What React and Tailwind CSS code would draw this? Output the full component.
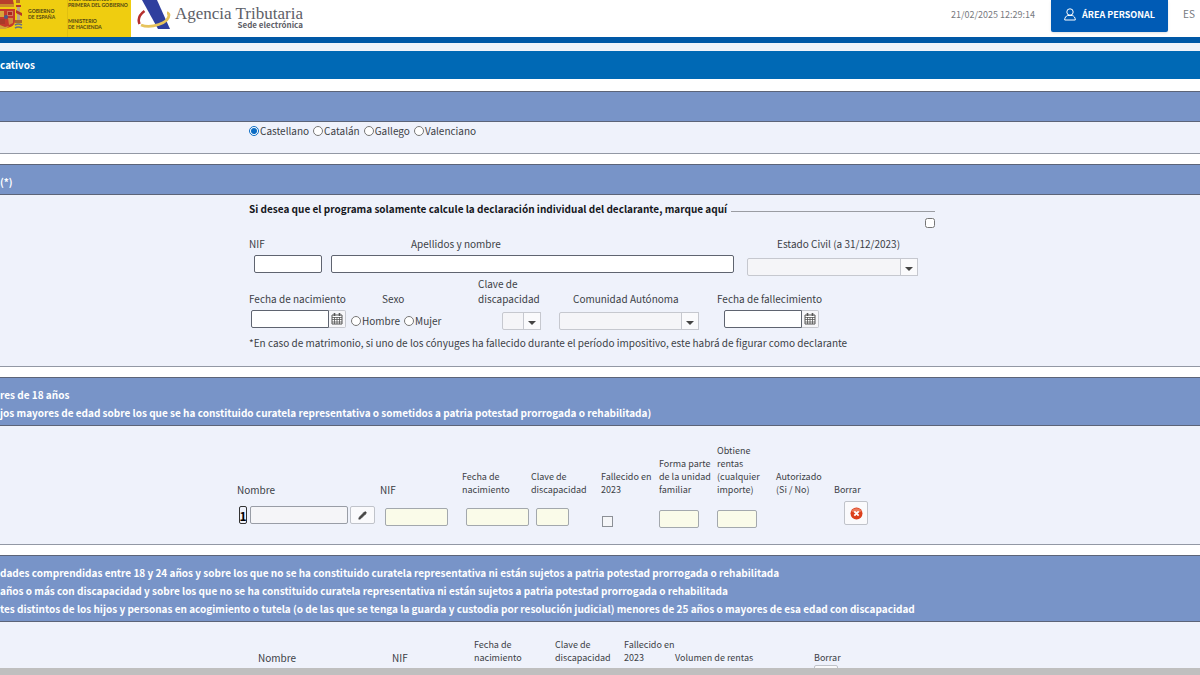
import { useState } from 'react';
import { Pencil } from 'lucide-react';

const languages = ['Castellano', 'Catalán', 'Gallego', 'Valenciano'];

const EmblemIcon = () => (
  <svg width="24" height="36" viewBox="0 0 24 36" aria-hidden="true">
    <path d="M0 0h13l1 5H0z" fill="#b8402c" />
    <path d="M0 4h14v3H0z" fill="#c98a2c" />
    <path d="M0 9h15v12c0 5-6 7-9 7H0z" fill="#c4392c" />
    <path d="M0 11h4v6H0z" fill="#d9a33a" />
    <path d="M7 11h6v5H7z" fill="#cf7a5c" />
    <path d="M8 12h4v3H8z" fill="#a82a20" />
    <path d="M8 18h5v5l-4 2z" fill="#d08a3c" />
    <path d="M0 19h5v5H0z" fill="#a93a2a" />
    <circle cx="6" cy="17" r="2" fill="#4a5a8a" />
    <path d="M0 25l5 2 4-1-3 3H0z" fill="#cfa43a" />
    <path d="M16 0h4v3h-4z" fill="#b06a2a" />
    <path d="M17 6h3v15h-3z" fill="#b9a48a" />
    <path d="M16 10l6 3v3l-6-3zM16 5h5v2h-5z" fill="#b3372a" />
    <path d="M15 20h7v3h-7z" fill="#a8672a" />
    <path d="M15 25q3-2 7 0M15 28q3-2 7 0" stroke="#64708a" strokeWidth="1.6" fill="none" />
  </svg>
);

const AgencyLogo = () => (
  <svg width="36" height="32" viewBox="0 0 36 32" fill="none" aria-hidden="true">
    <path d="M5 0h15l13 29H21z" fill="#2f3f9e" />
    <path d="M7.500 11C2 15 .5 19 2.500 24" stroke="#b5302e" strokeWidth="2.500" />
    <path d="M4 25c10 4 28-2 28-10 0-1-1-2-2-2" stroke="#e6c35c" strokeWidth="2.800" />
  </svg>
);

const CalendarIcon = () => (
  <svg width="12" height="12" viewBox="0 0 12 12" aria-hidden="true">
    <path d="M1 2h10v9H1z" fill="#fff" stroke="#555" />
    <path d="M1 4.500h10M1 6.500h10M1 9h10M3.500 4v7M6 4v7M8.500 4v7" stroke="#555" strokeWidth=".8" />
    <path d="M3.500 0v3M8.500 0v3" stroke="#555" strokeWidth="1.600" />
  </svg>
);

const UserIcon = () => (
  <svg width="12" height="13" viewBox="0 0 12 13" fill="none" stroke="#fff" aria-hidden="true">
    <circle cx="6" cy="4" r="3.200" />
    <path d="M.7 12c0-2.500 1.300-4 3-4.500h4.600c1.700.5 3 2 3 4.500z" />
  </svg>
);

const DeleteIcon = () => (
  <svg width="13" height="13" viewBox="0 0 13 13" aria-hidden="true">
    <circle cx="6.500" cy="6.500" r="6" fill="#dc3f1c" />
    <path d="M1.500 4.500a5.500 5.500 0 0 1 10 0q-5 2-10 0z" fill="#ec7a5c" />
    <path d="M4.300 4.300l4.400 4.400M8.700 4.300L4.300 8.700" stroke="#fff" strokeWidth="1.800" />
  </svg>
);

const Section = ({ lines, children }) => (
  <section className="mb-[10px]">
    <header className="min-h-[31px] border-y border-[#5c6478] bg-[#7894c8] pt-2 pb-[3px] font-bold leading-[18px] text-white">
      {lines.map((line) => (
        <h2 key={line} className="whitespace-nowrap">{line}</h2>
      ))}
    </header>
    <div className="border-b border-[#9298a4] bg-[#eff2fb]">{children}</div>
  </section>
);

const SelectBox = ({ id, className }) => (
  <div className={`relative h-[18px] ${className}`}>
    <select id={id} className="block h-full w-full appearance-none rounded-xs border border-[#c6c8cf] bg-[#f5f5f8]">
      <option></option>
    </select>
    <span className="pointer-events-none absolute inset-y-0 right-0 flex w-[18px] items-center justify-center border border-[#c6c8cf] bg-[#fafafc]">
      <svg width="8" height="4" viewBox="0 0 8 4" className="mt-1" aria-hidden="true">
        <path d="M0 0h8L4 4z" fill="#444" />
      </svg>
    </span>
  </div>
);

const DateBox = ({ id, className }) => (
  <div className={`flex h-[18px] ${className}`}>
    <input id={id} type="text" className="w-[78px] rounded-l-xs border border-[#5f6470] bg-white px-1" />
    <button type="button" aria-label="Calendario" className="flex w-[17px] items-center justify-center rounded-r-xs border border-l-0 border-[#c6c8cf] bg-[#f7f7fa]">
      <CalendarIcon />
    </button>
  </div>
);

const radioStyle = 'm-0 size-[10px] accent-[#0a6cc4]';
const cellInput = 'block h-[18px] rounded-xs border border-[#a3a8ad] bg-[#fafbe9]';

const App = () => {
  const [language, setLanguage] = useState('Castellano');

  return (
    <div className="flex h-screen flex-col overflow-hidden bg-white font-['Noto_Sans_CJK_SC',sans-serif] text-[10px] leading-4 text-[#3c3f46]">
      <header className="flex h-[43px] shrink-0 justify-between border-b-[6px] border-[#0058a6]">
        <div className="flex overflow-hidden">
          <div className="flex h-[37px] w-[131px] bg-[#efcd10] font-['Lato',sans-serif] text-[5px] font-bold leading-[6px] text-[#4e4312]">
            <EmblemIcon />
            <p className="w-[43px] pt-2 pl-1">GOBIERNO<br />DE ESPAÑA</p>
            <p className="flex flex-col justify-end whitespace-nowrap border-l border-[#e0c010] pb-[7px]">
              <span>VICEPRESIDENCIA</span>
              <span className="mb-[10px]">PRIMERA DEL GOBIERNO</span>
              <span>MINISTERIO</span>
              <span>DE HACIENDA</span>
            </p>
          </div>
          <div className="ml-[6px] flex">
            <AgencyLogo />
            <div className="pt-[6px] pl-[2px] text-right text-[#5e6067]">
              <p className="font-['Liberation_Serif',serif] text-[17px] leading-[15px]">Agencia Tributaria</p>
              <p className="text-[8px] font-bold leading-[8px]">Sede electrónica</p>
            </div>
          </div>
        </div>
        <div className="flex items-start">
          <time className="pt-[7px] text-[9px] text-[#777a80]">21/02/2025 12:29:14</time>
          <button type="button" className="ml-4 flex h-8 w-[117px] items-center justify-center gap-[6px] rounded-b-xs bg-[#005bb5] pb-[3px] text-[9px] font-bold text-white shadow">
            <UserIcon />
            ÁREA PERSONAL
          </button>
          <a href="#idioma" className="w-8 pt-[6px] pl-[15px] text-[10px] text-[#777a80]">ES</a>
        </div>
      </header>

      <main className="min-h-0 flex-1 overflow-hidden">
        <div className="h-2 bg-[#f0f3fa]"></div>
        <h1 className="mb-3 h-7 bg-[#0069b5] pt-[6px] font-bold text-white">cativos</h1>

        <Section lines={[]}>
          <div className="flex h-[31px] gap-1 pt-px pl-[249px]">
            {languages.map((item) => (
              <label key={item} className="flex h-4 items-center gap-px">
                <input
                  type="radio"
                  name="language"
                  className={radioStyle}
                  checked={language === item}
                  onChange={() => setLanguage(item)}
                />
                {item}
              </label>
            ))}
          </div>
        </Section>

        <Section lines={['(*)']}>
          <div className="h-[171px] pt-[6px] pl-[249px]">
            <div className="w-[686px]">
              <label htmlFor="individual" className="flex items-center gap-1 whitespace-nowrap font-bold text-[#15171c]">
                Si desea que el programa solamente calcule la declaración individual del declarante, marque aquí
                <span className="mt-1 flex-1 border-b border-[#9a9ca2]"></span>
              </label>
              <input id="individual" type="checkbox" className="mt-px ml-auto block size-[10px]" />
            </div>

            <div className="mt-2 grid grid-cols-[82px_416px_171px]">
              <div>
                <label htmlFor="nif" className="block">NIF</label>
                <input id="nif" type="text" className="mt-[3px] ml-[5px] block h-[18px] w-[68px] rounded-xs border border-[#5f6470] bg-white px-1" />
              </div>
              <div>
                <label htmlFor="name" className="block pl-20">Apellidos y nombre</label>
                <input id="name" type="text" className="mt-[3px] block h-[18px] w-[403px] rounded-xs border border-[#5f6470] bg-white px-1" />
              </div>
              <div>
                <label htmlFor="civil" className="block pl-[30px]">Estado Civil (a 31/12/2023)</label>
                <SelectBox id="civil" className="mt-[6px] w-[171px]" />
              </div>
            </div>

            <div className="grid grid-cols-[102px_127px_81px_158px_110px] items-end whitespace-nowrap leading-[15px]">
              <label htmlFor="birth">Fecha de nacimiento</label>
              <span className="pl-[31px]">Sexo</span>
              <label htmlFor="key">Clave de<br />discapacidad</label>
              <label htmlFor="region" className="pl-[14px]">Comunidad Autónoma</label>
              <label htmlFor="death">Fecha de fallecimiento</label>
            </div>
            <div className="mt-1 grid grid-cols-[102px_127px_81px_158px_110px] items-start">
              <DateBox id="birth" className="pl-[2px]" />
              <div className="flex gap-1 pt-[3px]">
                <label className="flex items-center gap-px"><input type="radio" name="sex" className={radioStyle} />Hombre</label>
                <label className="flex items-center gap-px"><input type="radio" name="sex" className={radioStyle} />Mujer</label>
              </div>
              <SelectBox id="key" className="mt-[2px] ml-6 w-[39px]" />
              <SelectBox id="region" className="mt-[2px] w-[140px]" />
              <DateBox id="death" className="pl-[7px]" />
            </div>
            <p className="mt-[5px] whitespace-nowrap">
              *En caso de matrimonio, si uno de los cónyuges ha fallecido durante el período impositivo, este habrá de figurar como declarante
            </p>
          </div>
        </Section>

        <Section
          lines={[
            'res de 18 años',
            'jos mayores de edad sobre los que se ha constituido curatela representativa o sometidos a patria potestad prorrogada o rehabilitada)',
          ]}
        >
          <div className="h-[118px] pt-[18px] pl-[237px]">
            <table className="w-[657px] table-fixed text-left text-[9px] leading-[13px]">
              <colgroup>
                <col className="w-[143px]" />
                <col className="w-[82px]" />
                <col className="w-[69px]" />
                <col className="w-[70px]" />
                <col className="w-[58px]" />
                <col className="w-[58px]" />
                <col className="w-[59px]" />
                <col className="w-[58px]" />
                <col className="w-[60px]" />
              </colgroup>
              <thead className="whitespace-nowrap align-bottom">
                <tr>
                  <th className="text-[10px] font-normal">Nombre</th>
                  <th className="text-[10px] font-normal">NIF</th>
                  <th className="font-normal">Fecha de<br />nacimiento</th>
                  <th className="font-normal">Clave de<br />discapacidad</th>
                  <th className="font-normal">Fallecido en<br />2023</th>
                  <th className="font-normal">Forma parte<br />de la unidad<br />familiar</th>
                  <th className="font-normal">Obtiene<br />rentas<br />(cualquier<br />importe)</th>
                  <th className="font-normal">Autorizado<br />(Si / No)</th>
                  <th className="font-normal">Borrar</th>
                </tr>
              </thead>
              <tbody className="align-top">
                <tr>
                  <td className="pt-[10px]">
                    <div className="flex gap-[2px] pl-[2px]">
                      <span className="flex h-[18px] w-2 items-center justify-center rounded-xs border border-[#333] text-[12px] font-bold text-black">1</span>
                      <input type="text" aria-label="Nombre" className="ml-px h-[18px] w-[98px] rounded-xs border border-[#999da6] bg-[#f5f5f8]" />
                      <button type="button" aria-label="Editar" className="flex h-[18px] w-[25px] items-center justify-center rounded-xs border border-[#c0c3ca] bg-[#fafafc]">
                        <Pencil size={9} fill="#444" color="#444" />
                      </button>
                    </div>
                  </td>
                  <td className="pt-3 pl-[5px]"><input type="text" aria-label="NIF" className={`${cellInput} w-[63px]`} /></td>
                  <td className="pt-3 pl-1"><input type="text" aria-label="Fecha de nacimiento" className={`${cellInput} w-[63px]`} /></td>
                  <td className="pt-3 pl-[5px]"><input type="text" aria-label="Clave de discapacidad" className={`${cellInput} w-[33px]`} /></td>
                  <td className="pt-5 pl-px"><input type="checkbox" aria-label="Fallecido en 2023" className="block size-[11px] appearance-none border border-[#8c9096] bg-[#f5f6f8]" /></td>
                  <td className="pt-[14px]"><input type="text" aria-label="Forma parte" className={`${cellInput} w-10`} /></td>
                  <td className="pt-[14px]"><input type="text" aria-label="Obtiene rentas" className={`${cellInput} w-10`} /></td>
                  <td></td>
                  <td className="pt-[5px] pl-[10px]">
                    <button type="button" aria-label="Borrar" className="flex size-6 items-center justify-center rounded-xs border border-[#c0c3ca] bg-[#fafafc]">
                      <DeleteIcon />
                    </button>
                  </td>
                </tr>
              </tbody>
            </table>
          </div>
        </Section>

        <Section
          lines={[
            'dades comprendidas entre 18 y 24 años y sobre los que no se ha constituido curatela representativa ni están sujetos a patria potestad prorrogada o rehabilitada',
            'años o más con discapacidad y sobre los que no se ha constituido curatela representativa ni están sujetos a patria potestad prorrogada o rehabilitada',
            'tes distintos de los hijos y personas en acogimiento o tutela (o de las que se tenga la guarda y custodia por resolución judicial) menores de 25 años o mayores de esa edad con discapacidad',
          ]}
        >
          <div className="pt-4 pb-6 pl-[258px]">
            <table className="w-[626px] table-fixed text-left text-[9px] leading-[13px]">
              <colgroup>
                <col className="w-[134px]" />
                <col className="w-[82px]" />
                <col className="w-[81px]" />
                <col className="w-[69px]" />
                <col className="w-[51px]" />
                <col className="w-[139px]" />
                <col className="w-[70px]" />
              </colgroup>
              <thead className="whitespace-nowrap align-bottom">
                <tr>
                  <th className="text-[10px] font-normal">Nombre</th>
                  <th className="text-[10px] font-normal">NIF</th>
                  <th className="font-normal">Fecha de<br />nacimiento</th>
                  <th className="font-normal">Clave de<br />discapacidad</th>
                  <th className="font-normal">Fallecido en<br />2023</th>
                  <th className="font-normal">Volumen de rentas</th>
                  <th className="font-normal">Borrar</th>
                </tr>
              </thead>
              <tbody>
                <tr>
                  <td colSpan={6}></td>
                  <td className="pt-px">
                    <button type="button" aria-label="Borrar" className="block size-6 rounded-xs border border-[#c0c3ca] bg-[#fafafc]"></button>
                  </td>
                </tr>
              </tbody>
            </table>
          </div>
        </Section>
      </main>
      <footer className="h-[7px] shrink-0 bg-[#bfbfbf]"></footer>
    </div>
  );
};

export default App;
